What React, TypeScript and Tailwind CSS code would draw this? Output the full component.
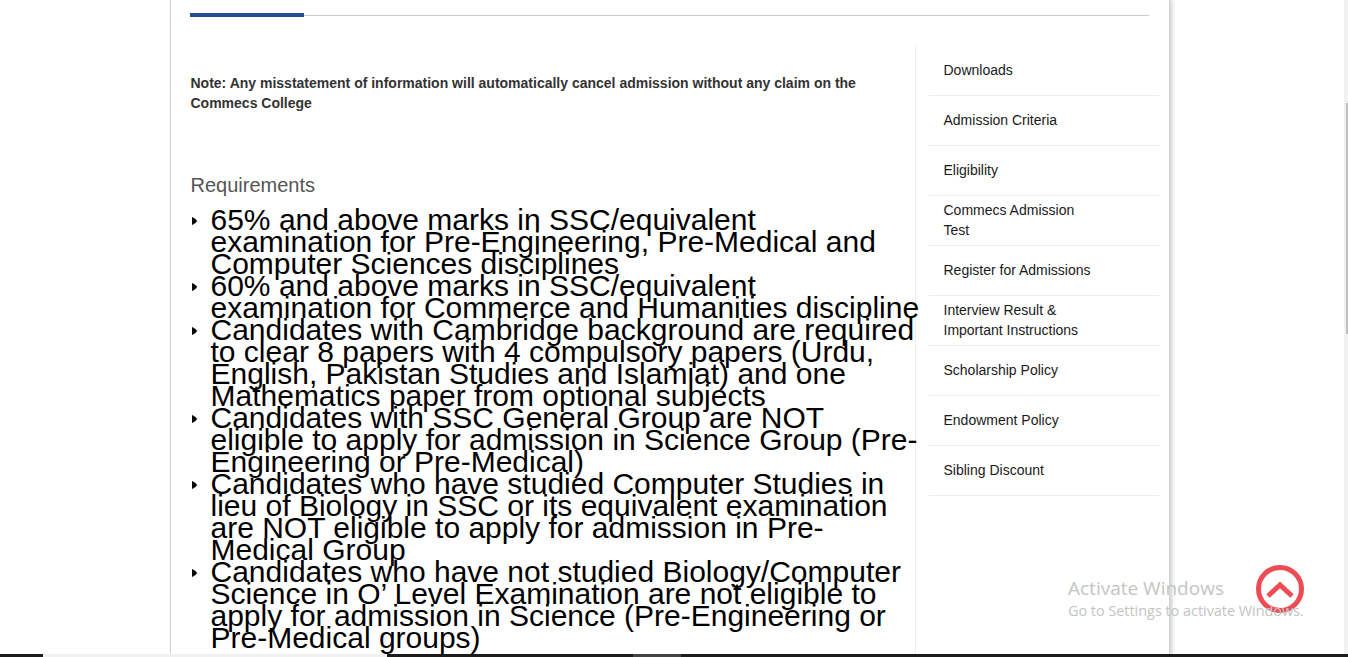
const sideLinks = [
  'Downloads',
  'Admission Criteria',
  'Eligibility',
  'Commecs Admission Test',
  'Register for Admissions',
  'Interview Result & Important Instructions',
  'Scholarship Policy',
  'Endowment Policy',
  'Sibling Discount',
]

const requirements = [
  '65% and above marks in SSC/equivalent examination for Pre-Engineering, Pre-Medical and Computer Sciences disciplines',
  '60% and above marks in SSC/equivalent examination for Commerce and Humanities discipline',
  'Candidates with Cambridge background are required to clear 8 papers with 4 compulsory papers (Urdu, English, Pakistan Studies and Islamiat) and one Mathematics paper from optional subjects',
  'Candidates with SSC General Group are NOT eligible to apply for admission in Science Group (Pre-Engineering or Pre-Medical)',
  'Candidates who have studied Computer Studies in lieu of Biology in SSC or its equivalent examination are NOT eligible to apply for admission in Pre-Medical Group',
  "Candidates who have not studied Biology/Computer Science in O’ Level Examination are not eligible to apply for admission in Science (Pre-Engineering or Pre-Medical groups)",
]

export default function App() {
  return (
    <div className="relative flex h-[657px] flex-col overflow-hidden bg-white font-['Liberation_Sans',Arial,sans-serif]">
      <div className="ml-[170px] flex min-h-0 w-[1000px] flex-1 flex-col overflow-hidden border-x border-[#d4d4d4] shadow-[2px_0_4px_rgba(0,0,0,0.2)]">
        {/* Tab rule */}
        <div className="mt-[13px] mr-[20px] ml-[19px] flex h-1 items-center">
          <div className="h-1 w-[114px] bg-[#26508c]" />
          <div className="h-px flex-1 bg-[#cccccc]" />
        </div>

        <div className="mt-[29px] flex min-h-0 flex-1">
          {/* Main content */}
          <div className="relative z-10 w-[744px] shrink-0 pl-[19.5px]">
            <p className="mt-[27px] w-[700px] text-[14px] leading-[20px] font-bold text-[#333333]">
              Note: Any misstatement of information will automatically cancel admission without any claim on the Commecs College
            </p>
            <h4 className="mt-[61px] text-[20px] leading-[22px] text-[#555555]">Requirements</h4>
            <ul className="mt-[13px] w-[732px] text-[30px] leading-[22px] text-black">
              {requirements.map((item) => (
                <li key={item} className="relative pl-[20px]">
                  <svg className="absolute top-[8px] left-[1px]" width="5" height="8" viewBox="0 0 5 8" fill="#000000">
                    <path d="M0 0 L2 1 Q5 3 5 4 Q5 5 2 7 L0 8 Z" />
                  </svg>
                  {item}
                </li>
              ))}
            </ul>
          </div>

          {/* Side nav */}
          <div className="flex-1 border-l border-[#eeeeee] pr-[10px] pl-[13px]">
            {sideLinks.map((label) => (
              <div key={label} className="flex h-[50px] items-center border-b border-[#eeeeee] pb-[2px] pl-[14.5px]">
                <span className="w-[150px] text-[14px] leading-[20px] text-[#1a1a1a]">{label}</span>
              </div>
            ))}
          </div>
        </div>
      </div>

      {/* Bottom strip */}
      <div className="flex h-[3px] shrink-0 bg-[#1c1c1c]">
        <div className="ml-[43px] w-[344px] bg-[#f0f0f0]" />
        <div className="ml-[246px] w-[48px] bg-[#444444]" />
      </div>

      {/* Page scrollbar */}
      <div className="absolute top-0 right-0 h-[654px] w-1 bg-[#f1f1f1]">
        <div className="mt-[103px] ml-[2px] h-[231px] w-[2px] bg-[#c1c1c1]" />
      </div>

      {/* Back to top */}
      <button className="absolute top-[565px] left-[1256px] flex h-12 w-12 items-center justify-center rounded-full border-[5px] border-[#ee4c55] bg-white/40">
        <svg width="30" height="20" viewBox="0 0 30 20" fill="none" stroke="#ee4c55" strokeWidth="5">
          <path d="M3 17 L15 6 L27 17" />
        </svg>
      </button>

      {/* Windows watermark */}
      <div className="pointer-events-none absolute top-[576px] left-[1068px] font-['Open_Sans',sans-serif] text-[#c4c4c4]">
        <div className="text-[19px] leading-[24px]">Activate Windows</div>
        <div className="text-[14.4px] leading-[21px]">Go to Settings to activate Windows.</div>
      </div>
    </div>
  )
}
